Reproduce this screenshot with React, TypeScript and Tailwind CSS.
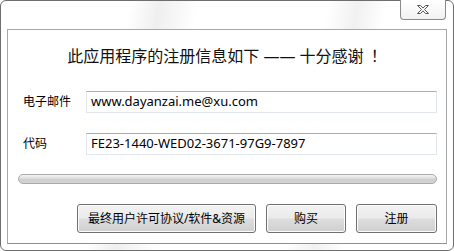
import React from "react";

const font = { fontFamily: '"Noto Sans", "Noto Sans CJK SC", sans-serif' };

const CloseGlyph = () => (
  <svg width="14" height="11" viewBox="0 0 14 11">
    <path
      d="M1.5 1.5h3l2.5 2.6 2.5-2.6h3l-4 4 4 4h-3l-2.5-2.6-2.5 2.6h-3l4-4z"
      fill="#fdfdfd"
      stroke="#555"
      strokeWidth="1"
      strokeLinejoin="round"
    />
  </svg>
);

const Field: React.FC<{ label: string; value: string }> = ({ label, value }) => (
  <div className="flex items-center">
    <span className="shrink-0 w-[78px] pl-[15px] text-[12px] text-black whitespace-nowrap">{label}</span>
    <div className="flex-1 mr-[9px] h-[22px] bg-white border border-[#e2e7ee] border-t-[#abadb3] flex items-center px-[4px] text-[13px] text-black">
      {value}
    </div>
  </div>
);

const WinButton: React.FC<{ label: string; width: string }> = ({ label, width }) => (
  <button
    className={`${width} h-[29px] rounded-[3px] border border-[#707070] bg-[linear-gradient(#f2f2f2_0%,#ebebeb_48%,#dddddd_52%,#cfcfcf_100%)] shadow-[inset_0_0_0_1px_#fcfcfc] text-[12px] text-black flex items-center justify-center`}
  >
    {label}
  </button>
);

export default function App() {
  return (
    <div className="w-[454px] h-[251px] bg-white" style={font}>
      <div className="relative w-full h-full rounded-[6px] border border-[#6e6e6e] bg-[linear-gradient(100deg,#ffffff_26%,#efefef_32%,#ffffff_40%,#ffffff_66%,#f1f1f1_72%,#ffffff_78%)] pt-[28px] px-[6px] pb-[6px]">
        <div className="absolute top-[-1px] right-[7px] w-[46px] h-[20px] rounded-b-[4px] border border-t-0 border-[#8a8a8a] bg-[linear-gradient(#ffffff,#f2f2f2)] flex items-center justify-center">
          <CloseGlyph />
        </div>

        <div className="h-[215px] bg-white border border-[#a8a8a8] border-b-[#8f8f8f] flex flex-col">
          <div className="mt-[16px] h-[20px] leading-[20px] text-center text-[16px] text-[#111]">
            此应用程序的注册信息如下 —— 十分感谢 <span className="ml-[3px]">！</span>
          </div>

          <div className="mt-[25px]">
            <Field label="电子邮件" value="www.dayanzai.me@xu.com" />
          </div>
          <div className="mt-[20px]">
            <Field label="代码" value="FE23-1440-WED02-3671-97G9-7897" />
          </div>

          <div className="mt-[19px] ml-[10px] mr-[9px] h-[10px] rounded-full border border-[#a9a9a9] bg-[linear-gradient(#f4f4f4_0%,#e2e2e2_35%,#cdcdcd_60%,#d6d6d6_100%)]" />

          <div className="mt-[20px] mr-[9px] flex justify-end gap-[10px]">
            <WinButton label="最终用户许可协议/软件&资源" width="w-[179px]" />
            <WinButton label="购买" width="w-[80px]" />
            <WinButton label="注册" width="w-[81px]" />
          </div>
        </div>
      </div>
    </div>
  );
}
